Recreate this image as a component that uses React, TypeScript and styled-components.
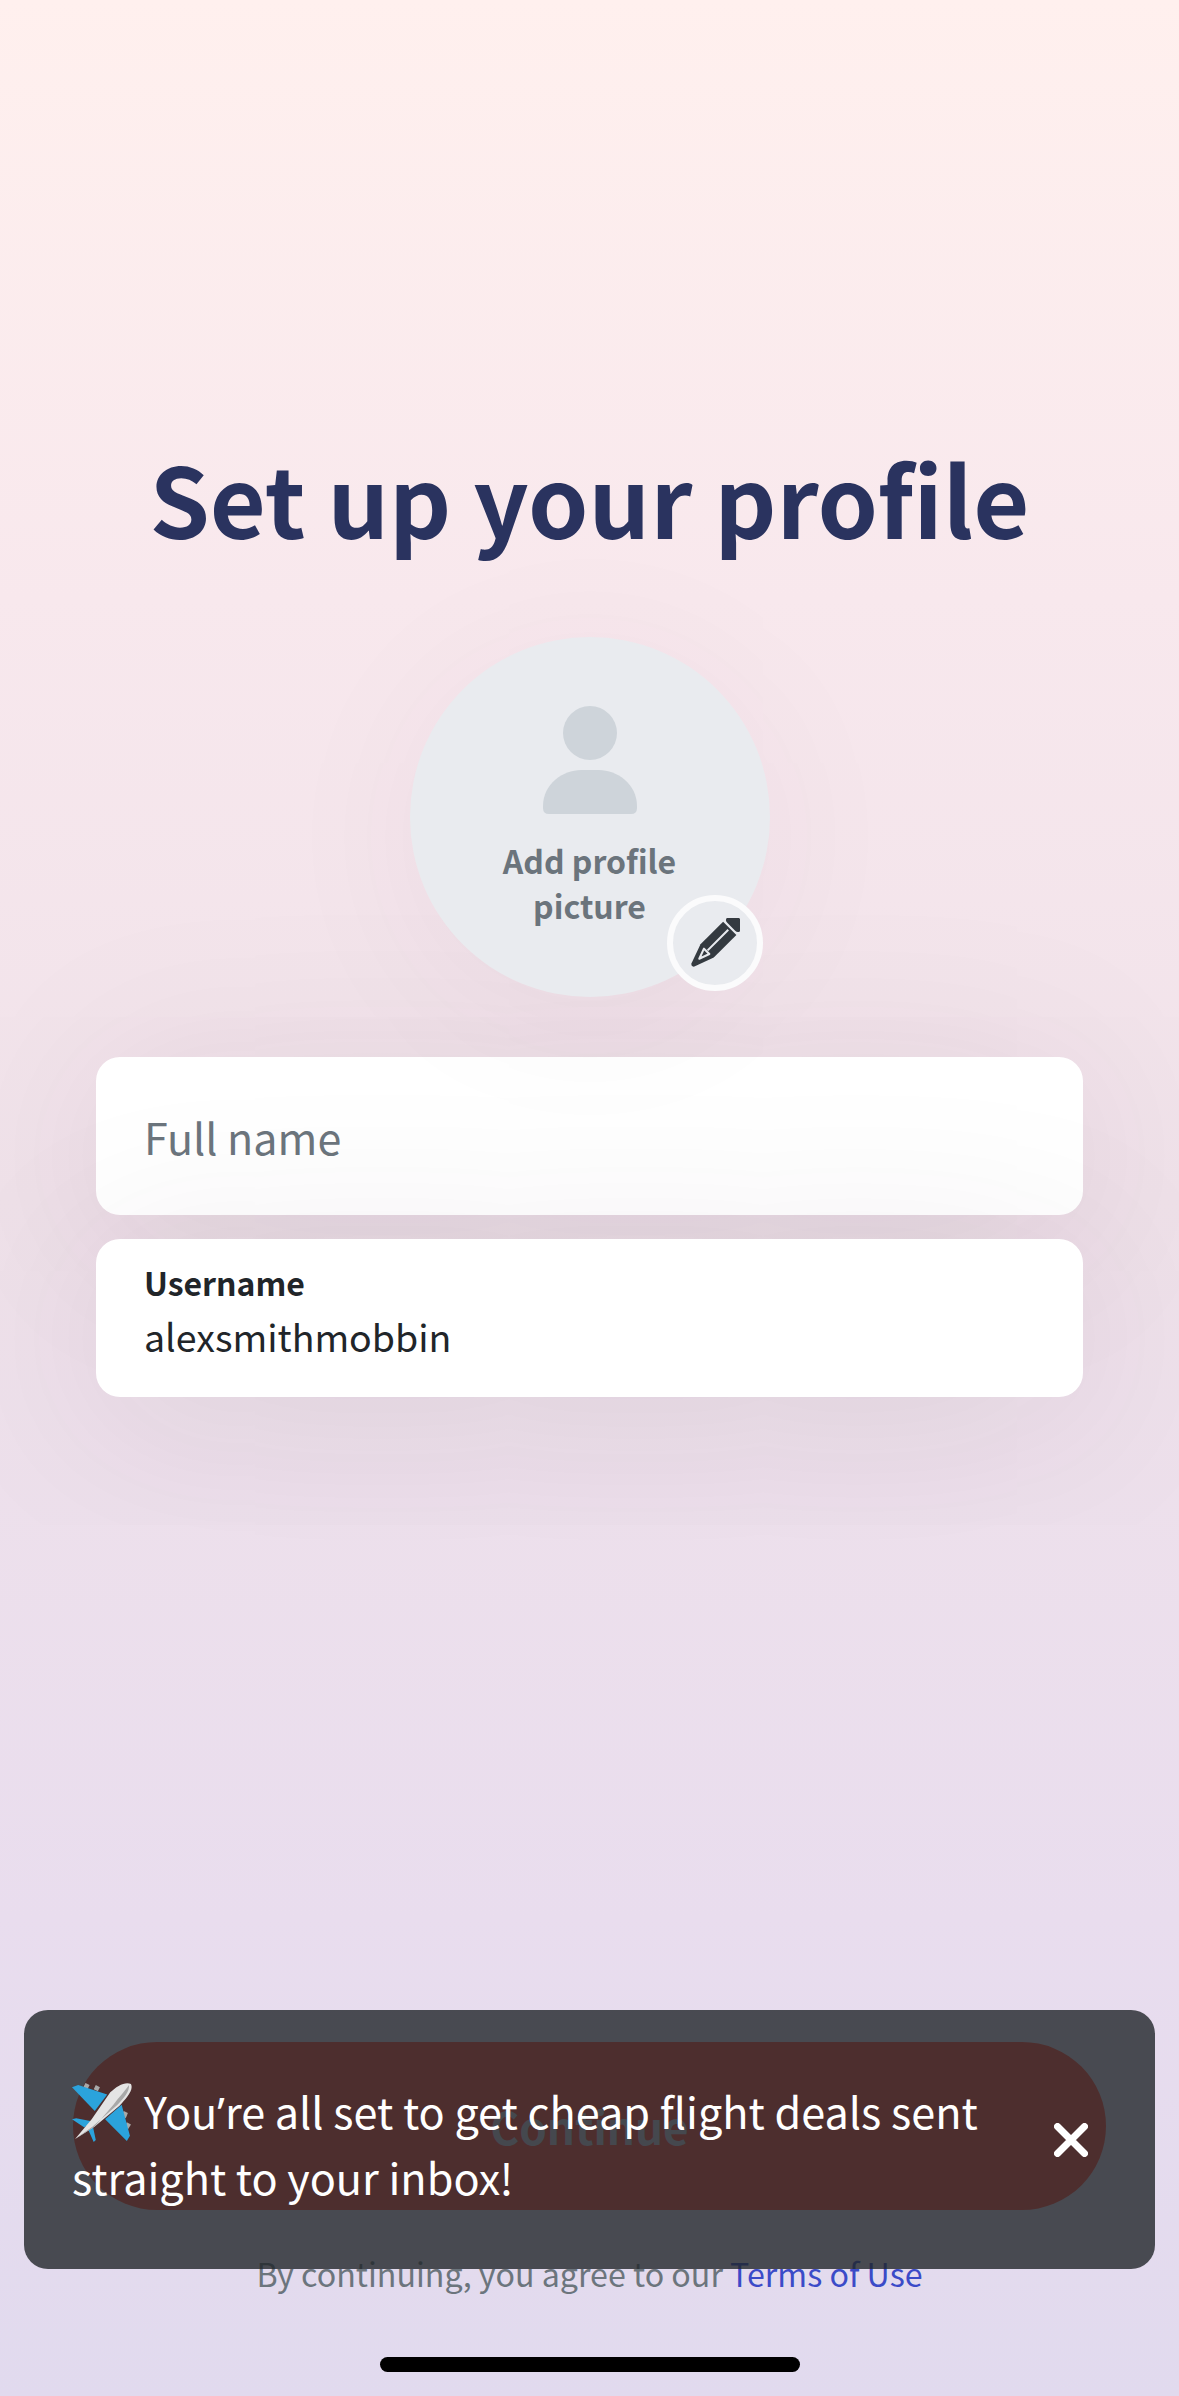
import styled, { createGlobalStyle } from 'styled-components';

const GlobalStyle = createGlobalStyle`
  * { box-sizing: border-box; }
  html, body { margin: 0; padding: 0; }
  body { font-family: "Noto Sans CJK SC", "Noto Sans", sans-serif; }
`;

const Page = styled.div`
  position: relative;
  width: 1179px;
  height: 2396px;
  overflow: hidden;
  display: flex;
  flex-direction: column;
  align-items: center;
  background: linear-gradient(180deg, #fff0ee 0%, #f8e8ed 25%, #f0e2ea 50%, #e9ddee 80%, #e1daee 100%);
`;

const Title = styled.h1`
  margin: 433px 0 0;
  font-size: 96.7px;
  line-height: 128px;
  font-weight: 700;
  color: #2a335f;
  text-align: center;
`;

const Avatar = styled.div`
  position: relative;
  margin-top: 76px;
  width: 360px;
  height: 360px;
  border-radius: 50%;
  background: #e9ebef;
  box-shadow: 0 20px 160px rgba(70, 40, 70, 0.05);
  display: flex;
  flex-direction: column;
  align-items: center;
  padding-top: 69px;
`;

const PersonIcon = styled.svg`
  width: 94px;
  height: 108px;
  display: block;
`;

const AvatarLabel = styled.div`
  margin-top: 24px;
  font-size: 32px;
  line-height: 45px;
  font-weight: 600;
  color: #6b747c;
  text-align: center;
`;

const EditBadge = styled.div`
  position: absolute;
  left: 257px;
  top: 258px;
  width: 96px;
  height: 96px;
  border-radius: 50%;
  border: 6px solid #fbfbfc;
  background: #e9ebef;
  display: flex;
  align-items: center;
  justify-content: center;
`;

const PencilIcon = styled.svg`
  width: 50px;
  height: 50px;
  display: block;
`;

const Form = styled.div`
  margin-top: 60px;
  width: 987px;
  display: flex;
  flex-direction: column;
  gap: 24px;
`;

const Field = styled.div`
  height: 158px;
  border-radius: 24px;
  background: #ffffff;
  padding: 0 48px;
  display: flex;
  flex-direction: column;
  justify-content: center;
  box-shadow: 0 20px 190px rgba(60, 30, 60, 0.1);
`;

const FilledField = styled(Field)`
  padding-bottom: 13px;
`;

const Placeholder = styled.div`
  font-size: 43px;
  line-height: 60px;
  color: #6c757d;
`;

const FieldLabel = styled.div`
  font-size: 32px;
  line-height: 42px;
  font-weight: 700;
  color: #212529;
`;

const FieldValue = styled.div`
  margin-top: 6px;
  font-size: 37.5px;
  line-height: 54px;
  color: #212529;
`;

const Footer = styled.div`
  margin-top: auto;
  width: 100%;
  display: flex;
  flex-direction: column;
  align-items: center;
  padding-bottom: 24px;
`;

const ContinueButton = styled.div`
  width: 1033px;
  height: 168px;
  border-radius: 84px;
  background: #ff5040;
  color: #d5cfe2;
  font-size: 44px;
  font-weight: 600;
  display: flex;
  align-items: center;
  justify-content: center;
`;

const Terms = styled.div`
  margin-top: 38px;
  font-size: 32.2px;
  line-height: 50px;
  color: #6c757d;
`;

const TermsLink = styled.span`
  color: #3b4bc8;
`;

const HomeBar = styled.div`
  margin-top: 59px;
  width: 420px;
  height: 15px;
  border-radius: 8px;
  background: #000000;
`;

const Toast = styled.div`
  position: absolute;
  left: 24px;
  top: 2010px;
  width: 1131px;
  height: 259px;
  border-radius: 24px;
  background: rgba(33, 37, 41, 0.8);
  padding: 0 67px 0 48px;
  display: flex;
  align-items: center;
  justify-content: space-between;
`;

const ToastText = styled.div`
  width: 930px;
  padding-top: 6px;
  font-size: 43.2px;
  line-height: 66px;
  color: #ffffff;
`;

const Apostrophe = styled.span`
  font-family: "Noto Sans", sans-serif;
  line-height: 0;
`;

const PlaneIcon = styled.svg`
  width: 60px;
  height: 60px;
  vertical-align: -1px;
  margin: -12px 12px -12px 0;
`;

const CloseIcon = styled.svg`
  width: 34px;
  height: 34px;
  flex: none;
`;

const App = () => {
  return (
    <Page>
      <GlobalStyle />
      <Title>Set up your profile</Title>

      <Avatar>
        <PersonIcon viewBox="0 0 94 108">
          <circle cx="47" cy="27" r="27" fill="#ced4da" />
          <path d="M0 100 C0 78 20 64 38 64 H56 C74 64 94 78 94 100 V102 Q94 108 88 108 H6 Q0 108 0 102 Z" fill="#ced4da" />
        </PersonIcon>
        <AvatarLabel>
          Add profile
          <br />
          picture
        </AvatarLabel>
        <EditBadge>
          <PencilIcon viewBox="-72 -72 144 144">
            <g transform="rotate(45)">
              <rect x="-27" y="-100" width="54" height="34" rx="11" fill="#343a40" />
              <path d="M-27 -60 H27 V32 L6 90 Q0 98 -6 90 L-27 32 Z" fill="#343a40" />
              <path d="M0 -54 V30 M-11 34 L0 64 L11 34 Z" stroke="#e9ebef" strokeWidth="6" fill="none" strokeLinejoin="round" />
            </g>
          </PencilIcon>
        </EditBadge>
      </Avatar>

      <Form>
        <Field>
          <Placeholder>Full name</Placeholder>
        </Field>
        <FilledField>
          <FieldLabel>Username</FieldLabel>
          <FieldValue>alexsmithmobbin</FieldValue>
        </FilledField>
      </Form>

      <Footer>
        <ContinueButton>Continue</ContinueButton>
        <Terms>
          By continuing, you agree to our <TermsLink>Terms of Use</TermsLink>
        </Terms>
        <HomeBar />
      </Footer>

      <Toast>
        <ToastText>
          <PlaneIcon viewBox="0 0 58 58">
            <path d="M13 1 L17 3 L15 7 L11 5 Z M23 3 L27 5 L25 9 L21 7 Z M50 28 L54 30 L52 35 L48 32 Z M53 39 L57 41 L54 46 L51 43 Z" fill="#a9a9a9" />
            <path d="M0 5 L6 3 L34 12 L22 28 Z" fill="#2ba3dc" />
            <path d="M48 22 L56 52 L53 57 L32 36 Z" fill="#2ba3dc" />
            <path d="M0 36 L4 35 L19 38 L12 44 Z M13 40 L20 42 L23 56 L21 58 Z" fill="#2ba3dc" />
            <path d="M57 2 C60 8 52 16 46 23 L22 43 L3 55 L19 36 L37 10 C43 4 52 -1 57 2 Z" fill="#e4e4e4" />
            <path d="M55 3 C56 9 50 16 44 22 L20 43 L3 55 L22 43 L40 22 C46 14 52 8 55 3 Z" fill="#a8a8a8" />
          </PlaneIcon>
          You<Apostrophe>’</Apostrophe>re all set to get cheap flight deals sent straight to your inbox!
        </ToastText>
        <CloseIcon viewBox="0 0 34 34">
          <path d="M3.5 3.5 L30.5 30.5 M30.5 3.5 L3.5 30.5" stroke="#ffffff" strokeWidth="7" strokeLinecap="round" />
        </CloseIcon>
      </Toast>
    </Page>
  );
};

export default App;
